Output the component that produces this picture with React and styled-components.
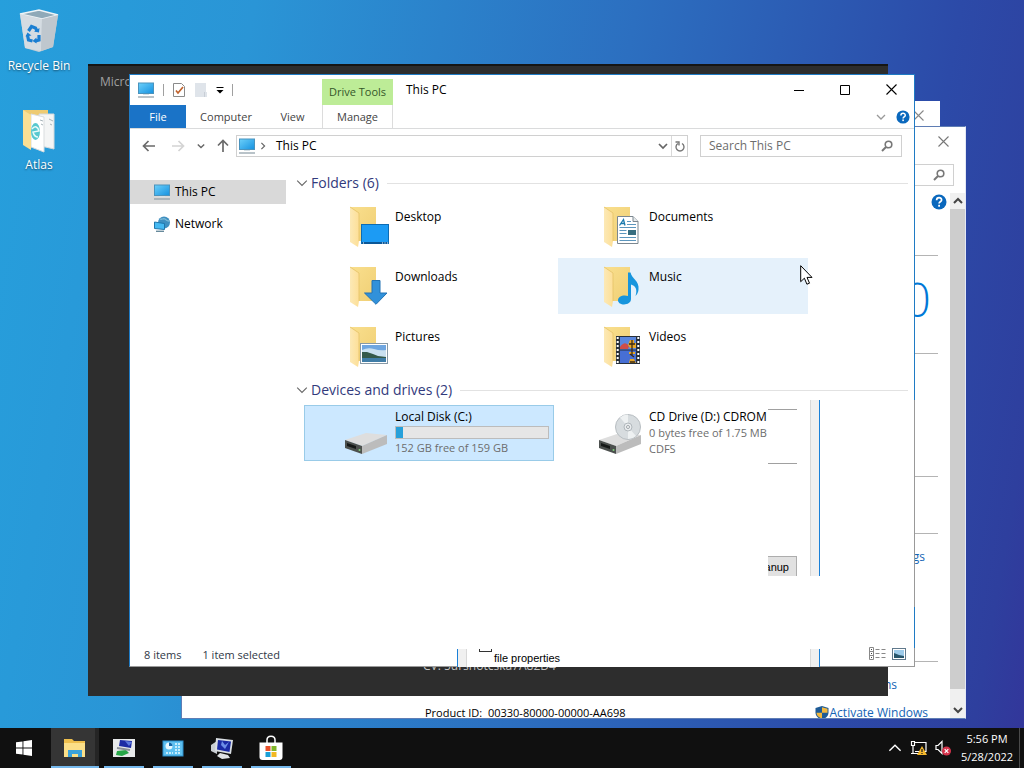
import React from 'react'
import styled, { createGlobalStyle } from 'styled-components'

const GlobalStyle = createGlobalStyle`
  * { box-sizing: border-box; }
  body {
    margin: 0;
    overflow: hidden;
    font-family: "Open Sans", "Noto Sans", sans-serif;
    font-size: 12px;
    line-height: 16px;
    color: #000;
  }
  button, input { font: inherit; color: inherit; }
  h1, h2, p { margin: 0; font-weight: 400; }
  svg { display: block; flex: none; }
`

const Screen = styled.div`
  display: flex;
  flex-direction: column;
  height: 100vh;
  background: linear-gradient(100deg, #269fdc 0%, #2a95d6 22%, #2c6fc0 55%, #2c4aa8 83%, #2e3f9e 95%, #33359a 100%);
`

const Desktop = styled.main`
  position: relative;
  flex: 1;
  overflow: hidden;
`

const IconColumn = styled.div`
  display: flex;
  flex-direction: column;
  width: 78px;
  padding-top: 6px;
  gap: 31px;
`

const DesktopIcon = styled.button`
  display: flex;
  flex-direction: column;
  align-items: center;
  gap: 4px;
  padding: 0;
  border: none;
  background: none;
  color: #fff;
  text-shadow: 0 1px 2px rgba(0, 0, 0, 0.5);
`

const Plain = styled.button`
  display: flex;
  align-items: center;
  justify-content: center;
  padding: 0;
  border: none;
  background: none;
  width: ${(p) => p.$w || 16}px;
`

/* windows */

const BackWindow = styled.section`
  position: absolute;
  top: 101px;
  right: 84px;
  left: 156px;
  bottom: 76px;
  background: #fff;
`

const BackTitle = styled.div`
  display: flex;
  justify-content: flex-end;
  align-items: center;
  height: 28px;
  padding-right: 14px;
`

const SystemWindow = styled.section`
  position: absolute;
  top: 126px;
  right: 58px;
  left: 181px;
  bottom: 9px;
  display: flex;
  flex-direction: column;
  border: 1px solid #5f7db4;
  border-right-color: #e4e8f4;
  background: #fff;
  overflow: hidden;
`

const SystemTitle = styled.div`
  display: flex;
  justify-content: flex-end;
  align-items: center;
  height: 29px;
  flex: none;
  padding-right: 14px;
`

const SystemSearchRow = styled.div`
  display: flex;
  justify-content: flex-end;
  align-items: center;
  height: 37px;
  flex: none;
  padding-right: 11px;
`

const SystemBody = styled.div`
  display: flex;
  flex: 1;
  min-height: 0;
`

const SystemContent = styled.div`
  display: flex;
  flex-direction: column;
  flex: 1;
`

const HelpRow = styled.div`
  display: flex;
  justify-content: flex-end;
  align-items: center;
  height: 18px;
  flex: none;
  padding-right: 3px;
`

const SystemSection = styled.div`
  display: flex;
  justify-content: flex-end;
  align-items: flex-start;
  flex: none;
  height: ${(p) => p.$h}px;
  margin-right: 12px;
  padding: 15px 13px 0 0;
  border-bottom: 1px solid #b4b4b4;
`

const Brand = styled.span`
  margin-right: -6px;
  color: #0078d7;
  font-size: 48px;
  font-weight: 300;
  line-height: 56px;
`

const SysLink = styled.a`
  color: #1464b4;
  text-decoration: none;
`

const TermsRow = styled.div`
  display: flex;
  justify-content: space-between;
  flex: none;
  height: 45px;
  padding: 15px 53px 0 63px;
`

const ProductRow = styled.div`
  display: flex;
  align-items: center;
  justify-content: space-between;
  height: 12px;
  padding: 0 22px 0 243px;
  line-height: 12px;
`

const Small = styled.span`
  font-size: 11px;
`

const Activate = styled.div`
  display: flex;
  align-items: center;
  gap: 1px;
`

const ScrollBar = styled.div`
  display: flex;
  flex-direction: column;
  align-items: center;
  width: 15px;
  background: #f0f0f0;
`

const Thumb = styled.div`
  flex: 1;
  width: 15px;
  background: #cdcdcd;
`

const ScrollButton = styled(Plain)`
  height: ${(p) => p.$h}px;
  align-items: flex-end;
  padding-bottom: 3px;
`

const DarkWindow = styled.section`
  position: absolute;
  top: 64px;
  right: 136px;
  left: 88px;
  bottom: 32px;
  display: flex;
  flex-direction: column;
  justify-content: space-between;
  padding: 8px 12px 22px;
  border-top: 2px solid #151515;
  background: #2d2d2d;
  color: #a0a0a0;
`

const DarkNote = styled.p`
  padding-left: 323px;
  color: #c4c4c4;
`

const ExplorerWindow = styled.section`
  position: absolute;
  top: 74px;
  right: 109px;
  left: 129px;
  bottom: 61px;
  display: flex;
  flex-direction: column;
  padding-right: 1px;
  border: 1px solid #1f7bc4;
  border-right: none;
  border-bottom-color: #9a9a9a;
  background: linear-gradient(#1f7bc4 0 55%, #999 55% 90%, #1f7bc4 90% 97%, #999 97%) right / 1px 100% no-repeat #fff;
`

const Panel = styled.div`
  display: flex;
  flex-direction: column;
  flex: 1;
  min-height: 0;
  background: #fff;
`

/* title and ribbon */

const TitleBar = styled.header`
  display: flex;
  height: 30px;
`

const QuickAccess = styled.div`
  display: flex;
  align-items: center;
  gap: 8px;
  width: 192px;
  padding-left: 7px;
`

const Separator = styled.span`
  width: 1px;
  height: 12px;
  background: #a0a0a0;
`

const ToolTab = styled.div`
  align-self: flex-end;
  width: 71px;
  height: 26px;
  padding-top: 5px;
  background: #bdec97;
  color: #35562a;
  text-align: center;
  font-size: 11px;
`

const Title = styled.h1`
  flex: 1;
  padding: 7px 0 0 13px;
  font-size: 12px;
`

const WindowButton = styled(Plain)`
  width: 46px;
  height: 29px;
`

const Ribbon = styled.nav`
  display: flex;
  align-items: stretch;
  height: 24px;
  border-bottom: 1px solid #dadbdc;
`

const Tab = styled.button`
  width: ${(p) => p.$w}px;
  padding: 0;
  border: none;
  background: ${(p) => (p.$file ? '#1a73c7' : 'none')};
  color: ${(p) => (p.$file ? '#fff' : '#444')};
  font-size: 11px;
  ${(p) => p.$tool && 'border: solid #dcdcdc; border-width: 0 1px; margin-left: 3px;'}
`

const RibbonEnd = styled.div`
  display: flex;
  align-items: center;
  gap: 7px;
  margin-left: auto;
  padding-right: 4px;
`

/* address row */

const AddressRow = styled.div`
  display: flex;
  align-items: center;
  height: 34px;
  padding: 0 12px 0 10px;
`

const NavButtons = styled.div`
  display: flex;
  align-items: center;
  justify-content: space-between;
  width: 90px;
  margin-right: 6px;
`

const AddressBox = styled.div`
  display: flex;
  align-items: center;
  flex: 1;
  height: 22px;
  padding-left: 1px;
  border: 1px solid #d0d0d0;
`

const Crumb = styled.span`
  flex: 1;
  padding-left: 6px;
`

const RefreshBox = styled(Plain)`
  width: 16px;
  height: 20px;
  border-left: 1px solid #d9d9d9;
`

const SearchBox = styled.label`
  display: flex;
  align-items: center;
  width: ${(p) => p.$w}px;
  height: 22px;
  margin-left: 12px;
  padding: 0 8px 0 8px;
  border: 1px solid #d0d0d0;

  input {
    flex: 1;
    min-width: 0;
    padding: 0;
    border: none;
    outline: none;
    background: none;
  }
  input::placeholder { color: #6d6d6d; opacity: 1; }
`

/* content */

const Content = styled.div`
  display: flex;
  flex: 1;
  min-height: 0;
`

const Sidebar = styled.aside`
  display: flex;
  flex-direction: column;
  gap: 8px;
  width: 166px;
  padding: 17px 10px 0 0;
`

const SideItem = styled.a`
  display: flex;
  align-items: center;
  gap: 4px;
  height: 24px;
  padding-left: 23px;
  background: ${(p) => (p.$active ? '#d9d9d9' : 'none')};
  color: #000;
  text-decoration: none;
`

const Files = styled.div`
  flex: 1;
  padding: 10px 6px 0 0;
`

const GroupHeader = styled.div`
  display: flex;
  align-items: center;
  height: 20px;
`

const GroupTitle = styled.h2`
  margin: 0 8px 0 4px;
  color: #323a7c;
  font-size: 14px;
`

const Rule = styled.span`
  flex: 1;
  height: 1px;
  background: #e2e2e2;
`

const ItemGrid = styled.div`
  display: grid;
  grid-template-columns: repeat(auto-fill, 250px);
  gap: 4px;
  padding: 5px 0 6px 8px;
`

const Item = styled.div`
  display: flex;
  align-items: flex-start;
  gap: 5px;
  height: 56px;
  padding: 4px 5px 0 38px;
  background: ${(p) => (p.$selected ? '#cce8ff' : p.$hover ? '#e5f1fb' : 'none')};
  box-shadow: ${(p) => (p.$selected ? 'inset 0 0 0 1px #99cbe8' : 'none')};
`

const ItemText = styled.div`
  flex: 1;
  padding-top: ${(p) => (p.$folder ? 7 : 0)}px;
  white-space: nowrap;
`

const Sub = styled.p`
  color: #6d6d6d;
  font-size: 11px;
`

const Capacity = styled.div`
  height: 13px;
  margin: 1px 0;
  border: 1px solid #bcbcbc;
  background: #e6e6e6;
`

const Used = styled.div`
  height: 11px;
  background: #26a0da;
`

const StatusBar = styled.footer`
  display: flex;
  align-items: center;
  gap: 21px;
  height: 22px;
  padding: 0 7px 0 14px;
  color: #303846;
  font-size: 11px;
`

const ViewButtons = styled.div`
  display: flex;
  gap: 6px;
  margin-left: auto;
  padding-bottom: 3px;
`

/* pieces of a dialog that have not been repainted */

const DialogPiece = styled.div`
  position: absolute;
  top: 325px;
  right: 95px;
  width: 52px;
  height: 176px;
  display: flex;
  background: #fff;
`

const PieceBody = styled.div`
  display: flex;
  flex-direction: column;
  justify-content: space-between;
  width: 29px;
  margin-right: 13px;
  padding-top: 9px;
`

const GroupFrame = styled.div`
  height: 55px;
  border: solid #a0a0a0;
  border-width: 1px 0;
`

const CleanupButton = styled.button`
  display: flex;
  justify-content: flex-end;
  height: 20px;
  padding: 2px 7px 0 0;
  border: 1px solid #adadad;
  border-width: 1px 1px 0 0;
  background: #e1e1e1;
  font-family: "Liberation Sans", sans-serif;
  font-size: 11px;
  overflow: hidden;
`

const DialogEdge = styled.div`
  flex: none;
  width: 10px;
  border-style: solid;
  border-width: 0 1px;
  border-color: ${(p) => (p.$left ? '#fff #d8d8d8 #fff #1a80d8' : '#fff #1a80d8 #fff #d8d8d8')};
  background: #f0f0f0;
`

const DialogFoot = styled.div`
  position: absolute;
  right: 95px;
  bottom: -1px;
  left: 327px;
  display: flex;
  height: 18px;
  background: #fff;
`

const FootLabel = styled.label`
  display: flex;
  flex: 1;
  align-items: flex-start;
  gap: 2px;
  padding-left: 12px;
  overflow: hidden;
  font-family: "Liberation Sans", sans-serif;
  font-size: 11px;
  line-height: 18px;

  input {
    appearance: none;
    width: 13px;
    height: 13px;
    margin: -10px 0 0;
    border: 1px solid #333;
    background: #fff;
  }
`

const Pointer = styled.svg`
  position: absolute;
  top: 265px;
  left: 800px;
`

/* taskbar */

const Taskbar = styled.footer`
  display: flex;
  align-items: stretch;
  height: 40px;
  background: #101010;
  color: #fff;
`

const TaskButtons = styled.div`
  display: flex;
  gap: 1px;
  padding-left: 3px;
`

const TaskButton = styled(Plain)`
  width: 48px;
  height: 40px;
  background:
    linear-gradient(#76b9ed, #76b9ed) bottom / ${(p) => (p.$active ? 48 : 40)}px 2px no-repeat,
    ${(p) => (p.$active ? 'linear-gradient(90deg, #353535 44px, #252525 44px)' : 'none')};
`

const Tray = styled.div`
  display: flex;
  align-items: center;
  margin-left: auto;
  padding-right: 4px;
`

const Clock = styled.div`
  width: 64px;
  text-align: center;
  font-size: 11px;
  line-height: 18px;
`

const ShowDesktop = styled.div`
  width: 1px;
  height: 40px;
  background: #4a4a4a;
`

/* icons */

const Monitor = ({ size = 18 }) => (
  <svg width={size} height={size} viewBox="0 0 18 18">
    <defs>
      <linearGradient id="scr" x1="0" y1="0" x2="1" y2="1">
        <stop offset="0" stopColor="#6cd0fa" />
        <stop offset="1" stopColor="#1591e0" />
      </linearGradient>
    </defs>
    <rect x="1.5" y="2" width="15" height="10.500" fill="url(#scr)" stroke="#4a93bd" />
    <path d="M1 16h16" stroke="#8a9ba5" strokeWidth="1.2" />
    <path d="M6 13.500h6" stroke="#d5e0e5" />
  </svg>
)

const NetworkIcon = () => (
  <svg width="18" height="18" viewBox="0 0 18 18">
    <circle cx="11" cy="7.500" r="6" fill="#3f8fc0" />
    <path d="M7 4c2 1 3-1 5 0s1 2 4 2" stroke="#7fbcd8" strokeWidth="1.300" fill="none" />
    <path d="M1.500 7l10 1.500v6l-10-1z" fill="#45b9f2" stroke="#1f77ac" />
    <path d="M3 16.300h8" stroke="#66899b" strokeWidth="1.400" />
  </svg>
)

const Close = ({ size = 11, color = '#000' }) => (
  <svg width={size} height={size} viewBox="0 0 11 11">
    <path d="M.5.5l10 10M10.500.5l-10 10" stroke={color} strokeWidth="1.1" />
  </svg>
)

const Chevron = ({ size = 10, color = '#666', turn = 0, width = 1.5 }) => (
  <svg width={size} height={size} viewBox="0 0 10 10">
    <path d="M1 3l4 4 4-4" fill="none" stroke={color} strokeWidth={width} transform={`rotate(${turn} 5 5)`} />
  </svg>
)

const Arrow = ({ color, turn = 0 }) => (
  <svg width="14" height="14" viewBox="0 0 14 14">
    <path d="M13 7H2M6.500 2L1.500 7l5 5" fill="none" stroke={color} strokeWidth="1.7" transform={`rotate(${turn} 7 7)`} />
  </svg>
)

const Magnifier = () => (
  <svg width="12" height="12" viewBox="0 0 12 12">
    <circle cx="7.500" cy="4.500" r="3.300" fill="none" stroke="#777" strokeWidth="1.600" />
    <path d="M5 7L1 11" stroke="#777" strokeWidth="2" />
  </svg>
)

const Help = ({ size }) => (
  <svg width={size} height={size} viewBox="0 0 16 16">
    <circle cx="8" cy="8" r="7.500" fill="#0a68bd" />
    <path d="M5.600 6.200c0-3.400 5-3.200 5-.3 0 1.900-2.500 1.900-2.500 3.700" fill="none" stroke="#fff" strokeWidth="1.700" />
    <rect x="7.200" y="10.800" width="1.800" height="1.900" fill="#fff" />
  </svg>
)

const overlays = {
  Desktop: (
    <>
      <rect x="19.500" y="22.500" width="27" height="19" fill="#1c9bf4" stroke="#0d6cb4" />
      <path d="M20 41h26" stroke="#0b5797" strokeWidth="2" />
      <path d="M21 41h1M40 41h1M42.500 41h1M45 41h1" stroke="#fff" />
    </>
  ),
  Downloads: <path d="M30 18.500h8V31h7L34 42.300 22.500 31H30z" fill="#3191da" stroke="#2273b4" />,
  Pictures: (
    <>
      <rect x="18.500" y="21.500" width="27" height="20" fill="#fff" stroke="#8799a6" />
      <rect x="20" y="23" width="24" height="17" fill="#6fa6e0" />
      <path d="M20 28q6-3 12-1t12 1v7H20z" fill="#c9e0f0" />
      <path d="M20 30l5 0 6 2 5 2 8 1v2H20z" fill="#34594a" />
      <path d="M20 36h24v4H20z" fill="#407da7" />
    </>
  ),
  Documents: (
    <>
      <path d="M21.500 14.500H37l5 5v22H21.500z" fill="#fff" stroke="#7b8790" />
      <path d="M37 14.500v5h5" fill="#e6eaec" stroke="#7b8790" />
      <path d="M23.500 23.500l4-6 1.500 6M25 21.500h4" stroke="#1979ad" strokeWidth="1.300" fill="none" />
      <path d="M31 19.500h4M31 22.500h9M23.500 25.500h16.500M23.500 28.500h7M23.500 31.500h7M23.500 35.500h16.500M23.500 38.500h16.500" stroke="#5c96bd" />
      <rect x="32" y="28" width="8" height="5" fill="#376e80" />
    </>
  ),
  Music: (
    <path
      d="M32 10.500h2.500c1 6 9 8 8 17-.2 3-1.500 5-3 6.500 2-6 .5-10-4.500-11.500V37c0 7-13 7-13 1.200 0-4 5.500-5.700 10-4.200z"
      fill="#1795dd"
    />
  ),
  Videos: (
    <>
      <rect x="20" y="14" width="24" height="28" fill="#28303a" />
      <path d="M21.700 15v27M42.300 15v27" stroke="#fff" strokeWidth="2" strokeDasharray="2 2" />
      <rect x="24" y="15" width="16" height="12.500" fill="#5b87dd" />
      <rect x="24" y="28.500" width="16" height="12.500" fill="#476fd4" />
      <path d="M24 25q5-7 9-1l-1 3h-8z" fill="#d04d48" />
      <path d="M34 18h4v3h2v5h-6l-2-3zM33 30h6v2h-6zM34 37h4l2 4h-7z" fill="#e7a727" />
      <path d="M33 22h6M36 18v16M34 32l4 3M34 40h5" stroke="#3c2a14" strokeWidth="1.300" />
    </>
  ),
}

const FolderIcon = ({ name }) => (
  <svg width="48" height="48" viewBox="0 0 48 48">
    <defs>
      <linearGradient id="fback" x1="0" y1="0" x2="1" y2="1">
        <stop offset="0" stopColor="#f9df8e" />
        <stop offset="1" stopColor="#f0cf74" />
      </linearGradient>
      <linearGradient id="fflap" x1="0" y1="0" x2="1" y2="0">
        <stop offset="0" stopColor="#fce9b6" />
        <stop offset="1" stopColor="#fddf97" />
      </linearGradient>
    </defs>
    <path d="M8 5h26v34H16z" fill="url(#fback)" />
    <path d="M8 5l9 6v28l-1 6-8-5z" fill="url(#fflap)" />
    <path d="M8 5l9 6v28" fill="none" stroke="#e3bf62" strokeWidth=".7" />
    {overlays[name]}
  </svg>
)

const DriveIcon = ({ disc }) => (
  <svg width="48" height="48" viewBox="0 0 48 48">
    <path d="M3 31l21-7 21 2-25 11z" fill="#dedede" />
    <path d="M20 37l25-11v9L20 45z" fill="#bcbcbc" />
    <path d="M3 31l17 6v8L3 39z" fill="#4c504e" />
    <path d="M5 34l9 3v3l-9-3z" fill="#151817" />
    <circle cx="17.500" cy="41" r="1" fill="#7fd07c" />
    {disc && (
      <>
        <circle cx="32" cy="18" r="12.500" fill="#d7dcdf" stroke="#b8bec2" />
        <path d="M32 18L24 8.500a12 12 0 0 1 8-3zM32 18l8 9a12 12 0 0 1-8 3z" fill="#eef1f2" />
        <circle cx="32" cy="18" r="4" fill="#e9ecee" stroke="#b1b8bc" />
        <circle cx="32" cy="18" r="1.500" fill="#fff" stroke="#9ea5a9" />
      </>
    )}
  </svg>
)

const RecycleBin = () => (
  <svg width="48" height="48" viewBox="0 0 48 48">
    <path d="M5 8l19-4 19 5-5 32-14 5-14-4z" fill="#c4ced6" />
    <path d="M5 8l19-4 19 5-16 4z" fill="#8fa9b8" stroke="#eef4f7" strokeWidth="1.500" />
    <path d="M5 8l22 5-1 32-16-3z" fill="#d5dce2" />
    <path d="M27 13l16-4-5 32-12 4z" fill="#bfc7ce" />
    <g fill="none" stroke="#1b7fd2" strokeWidth="3.200">
      <path d="M13.500 25l3-4.500 4 1.500 1.500 3M12.500 29l1 5 4 1M20.500 35l3.500-1 0-5" />
    </g>
    <path d="M19 25.500l5 1 .5-4.500zM10.500 30.500l2-4 4 3zM21.500 31.500v6l-4-2.500z" fill="#1b7fd2" />
  </svg>
)

const AtlasFolder = () => (
  <svg width="48" height="48" viewBox="0 0 48 48">
    <path d="M8 5h25v34H14z" fill="#eecb72" />
    <path d="M24 9h15v35l-13-3z" fill="#f4f5f5" stroke="#d5d9db" />
    <path d="M16 9l13 3v35l-13-5z" fill="#fff" stroke="#d9dddf" />
    <ellipse cx="20.500" cy="26.500" rx="4.500" ry="8.500" fill="#58c8cf" />
    <path d="M17 24c3-4 6-2 7 2l-6 1c1 4 3 5 5 5" fill="none" stroke="#e7fafa" strokeWidth="1.500" />
    <path d="M25 15l3 1M34 14l4 2M26 19l2 1M35 19l2 1" stroke="#a7b3b9" />
    <path d="M8 5l8 5v35l-8-5z" fill="#fadf94" />
  </svg>
)

const Clipboard = () => (
  <svg width="14" height="16" viewBox="0 0 14 16">
    <path d="M1.500 1.500h8l3 3v10h-11z" fill="#fff" stroke="#8a8a8a" />
    <path d="M4 8.500l2 2.500 5-6" fill="none" stroke="#c0622c" strokeWidth="1.700" />
  </svg>
)

const NewFolder = () => (
  <svg width="14" height="16" viewBox="0 0 14 16">
    <path d="M1 1h11v9h1v5H1z" fill="#dfe4ea" />
    <path d="M10.500 10v5" stroke="#c8ced6" />
  </svg>
)

const Thumbs = () => (
  <svg width="15" height="12" viewBox="0 0 15 12">
    <rect x=".5" y=".5" width="13" height="11" fill="#fff" stroke="#60798c" />
    <rect x="2" y="2" width="10" height="8" fill="#9dcbea" />
    <path d="M2 5l5 2 5 1v2H2z" fill="#28566c" />
  </svg>
)

const DetailsView = () => (
  <svg width="17" height="13" viewBox="0 0 17 13">
    <path d="M.5.5h4v12h-4zM.5 4.500h4M.5 8.500h4M6.500 2.500h4M12.500 2.500h4M6.500 6.500h4M12.500 6.500h4M6.500 10.500h4M12.500 10.500h4" fill="none" stroke="#888" />
    <path d="M2 2.500h1M2 6.500h1M2 10.500h1" stroke="#444" />
  </svg>
)

const Shield = () => (
  <svg width="14" height="14" viewBox="0 0 14 14">
    <path d="M7 0l6.500 2v4.500c0 4-3.500 6-6.500 7.500C4 12.500.5 10.500.5 6.500V2z" fill="#1e5b96" />
    <path d="M7 1.200l5.500 1.600v4H7zM7 6.800v6C4.500 11.500 1.500 10 1.500 6.800z" fill="#f2b83f" />
  </svg>
)

const ExplorerTask = () => (
  <svg width="24" height="24" viewBox="0 0 24 24">
    <path d="M1 3h8l2 2h11v15H1z" fill="#eebf4d" />
    <path d="M1 7h21v14H1z" fill="#fbdf88" />
    <path d="M5 21v-7h14v7h-4v-3H9v3z" fill="#3ba2da" />
  </svg>
)

const ServerTask = () => (
  <svg width="24" height="24" viewBox="0 0 24 24">
    <rect x="1" y="3" width="22" height="18" fill="#e7e9ea" />
    <path d="M8 4l12 1-1 7-12-2z" fill="#1d2ba4" />
    <path d="M13 5l7 1-3 4z" fill="#5a77dc" />
    <path d="M5 15l9-1 3 3-7 3-6-1z" fill="#26a647" />
    <path d="M5 12l13 2" stroke="#8a9098" strokeWidth="2" />
  </svg>
)

const PanelTask = () => (
  <svg width="24" height="24" viewBox="0 0 24 24">
    <rect x="2" y="5" width="20" height="15" fill="#5ec0f0" stroke="#2b8ecb" />
    <circle cx="8" cy="10" r="3.500" fill="#e7f8ff" />
    <path d="M8 10V6.500A3.500 3.500 0 0 1 11.500 10z" fill="#1568a8" />
    <path d="M14 8h6M14 11h6M14 14h6M5 17h7M14 17h6" stroke="#e8faff" strokeWidth="1.400" strokeDasharray="2 1" />
  </svg>
)

const RemoteTask = () => (
  <svg width="24" height="24" viewBox="0 0 24 24">
    <path d="M1 9l6-4v13l-6-3z" fill="#c8cdd2" />
    <path d="M6 2l17 2-2 14-16-3z" fill="#d9dee3" />
    <path d="M8 4l13 1.500-1.500 10.500L7 13.500z" fill="#1b2ba5" />
    <path d="M12 5l3 4 4-3-4 7-4-4z" fill="#6d8fe8" />
    <path d="M10 17l8 2 2 3-8 1-5-3z" fill="#e0e3e6" />
  </svg>
)

const StoreTask = () => (
  <svg width="26" height="26" viewBox="0 0 26 26">
    <path d="M9 8V5c0-5 8-5 8 0v3" fill="none" stroke="#fff" strokeWidth="1.500" />
    <path d="M1.500 7.500h23V22c0 2-1 3-3 3h-17c-2 0-3-1-3-3z" fill="#fff" />
    <path d="M7.500 11h5v5h-5z" fill="#e8502b" />
    <path d="M13.500 11h5v5h-5z" fill="#7fb529" />
    <path d="M7.500 17h5v5h-5z" fill="#1b9fd6" />
    <path d="M13.500 17h5v5h-5z" fill="#f2b822" />
  </svg>
)

const folders = ['Desktop', 'Documents', 'Downloads', 'Music', 'Pictures', 'Videos']
const tasks = [
  { name: 'File Explorer', icon: <ExplorerTask />, active: true },
  { name: 'Server Manager', icon: <ServerTask /> },
  { name: 'Control Panel', icon: <PanelTask /> },
  { name: 'Remote Desktop', icon: <RemoteTask /> },
  { name: 'Store', icon: <StoreTask /> },
]

const Group = ({ title, children }) => (
  <section>
    <GroupHeader>
      <Plain $w={11} aria-label={`Collapse ${title}`}>
        <Chevron size={12} color="#666" width={0.9} />
      </Plain>
      <GroupTitle>{title}</GroupTitle>
      <Rule />
    </GroupHeader>
    <ItemGrid>{children}</ItemGrid>
  </section>
)

const SystemProperties = () => (
  <SystemWindow>
    <SystemTitle>
      <Plain aria-label="Close"><Close size={11} color="#777" /></Plain>
    </SystemTitle>
    <SystemSearchRow>
      <SearchBox $w={200}>
        <input aria-label="Search" />
        <Magnifier />
      </SearchBox>
    </SystemSearchRow>
    <SystemBody>
      <SystemContent>
        <HelpRow><Help size={16} /></HelpRow>
        <SystemSection $h={45} />
        <SystemSection $h={98}><Brand>0</Brand></SystemSection>
        <SystemSection $h={123} />
        <SystemSection $h={57} />
        <SystemSection $h={128}><SysLink href="#settings">gs</SysLink></SystemSection>
        <TermsRow>
          <span>y</span>
          <SysLink href="#terms">ns</SysLink>
        </TermsRow>
        <ProductRow>
          <Small>Product ID:&nbsp; 00330-80000-00000-AA698</Small>
          <Activate>
            <Shield />
            <SysLink href="#activate">Activate Windows</SysLink>
          </Activate>
        </ProductRow>
      </SystemContent>
      <ScrollBar>
        <ScrollButton $h={16} aria-label="Scroll up"><Chevron turn={180} color="#444" width={2} /></ScrollButton>
        <Thumb />
        <ScrollButton $h={29} aria-label="Scroll down"><Chevron color="#444" width={2} /></ScrollButton>
      </ScrollBar>
    </SystemBody>
  </SystemWindow>
)

const Explorer = () => (
  <ExplorerWindow>
    <Panel>
      <TitleBar>
        <QuickAccess>
          <Monitor />
          <Separator />
          <Plain $w={14} aria-label="Properties"><Clipboard /></Plain>
          <Plain $w={14} aria-label="New folder"><NewFolder /></Plain>
          <Plain $w={8} aria-label="Customize">
            <svg width="8" height="8" viewBox="0 0 8 8"><path d="M.5 1.500h7" stroke="#000" /><path d="M.5 4h7L4 7.500z" /></svg>
          </Plain>
          <Separator />
        </QuickAccess>
        <ToolTab>Drive Tools</ToolTab>
        <Title>This PC</Title>
        <WindowButton aria-label="Minimize">
          <svg width="10" height="10" viewBox="0 0 10 10"><path d="M0 5.500h10" stroke="#000" /></svg>
        </WindowButton>
        <WindowButton aria-label="Maximize">
          <svg width="10" height="10" viewBox="0 0 10 10"><path d="M.5.5h9v9h-9z" fill="none" stroke="#000" /></svg>
        </WindowButton>
        <WindowButton aria-label="Close"><Close /></WindowButton>
      </TitleBar>
      <Ribbon>
        <Tab $w={56} $file>File</Tab>
        <Tab $w={80}>Computer</Tab>
        <Tab $w={53}>View</Tab>
        <Tab $w={71} $tool>Manage</Tab>
        <RibbonEnd>
          <Plain aria-label="Expand ribbon"><Chevron color="#999" width={1.3} /></Plain>
          <Help size={14} />
        </RibbonEnd>
      </Ribbon>
      <AddressRow>
        <NavButtons>
          <Plain $w={18} aria-label="Back"><Arrow color="#6a6a6a" /></Plain>
          <Plain $w={18} aria-label="Forward"><Arrow color="#d4d4d4" turn={180} /></Plain>
          <Plain $w={8} aria-label="Recent"><Chevron size={8} width={1.7} /></Plain>
          <Plain $w={14} aria-label="Up"><Arrow color="#6a6a6a" turn={90} /></Plain>
        </NavButtons>
        <AddressBox>
          <Monitor />
          <Plain $w={14} aria-label="Show locations"><Chevron size={8} turn={-90} /></Plain>
          <Crumb>This PC</Crumb>
          <Plain aria-label="Previous locations"><Chevron width={1.7} /></Plain>
          <RefreshBox aria-label="Refresh">
            <svg width="12" height="12" viewBox="0 0 12 12">
              <path d="M8 3.500A4 4 0 1 1 4 3.500M1.500 2h3.500v3.500" fill="none" stroke="#777" strokeWidth="1.400" />
            </svg>
          </RefreshBox>
        </AddressBox>
        <SearchBox $w={202}>
          <input aria-label="Search This PC" placeholder="Search This PC" />
          <Magnifier />
        </SearchBox>
      </AddressRow>
      <Content>
        <Sidebar>
          <SideItem href="#pc" $active><Monitor />This PC</SideItem>
          <SideItem href="#network"><NetworkIcon />Network</SideItem>
        </Sidebar>
        <Files>
          <Group title="Folders (6)">
            {folders.map((name) => (
              <Item key={name} $hover={name === 'Music'}>
                <FolderIcon name={name} />
                <ItemText $folder>{name}</ItemText>
              </Item>
            ))}
          </Group>
          <Group title="Devices and drives (2)">
            <Item $selected>
              <DriveIcon />
              <ItemText>
                <p>Local Disk (C:)</p>
                <Capacity><Used style={{ width: `${(7 / 159) * 100}%` }} /></Capacity>
                <Sub>152 GB free of 159 GB</Sub>
              </ItemText>
            </Item>
            <Item>
              <DriveIcon disc />
              <ItemText>
                <p>CD Drive (D:) CDROM</p>
                <Sub>0 bytes free of 1.75 MB</Sub>
                <Sub>CDFS</Sub>
              </ItemText>
            </Item>
          </Group>
        </Files>
      </Content>
      <StatusBar>
        <span>8 items</span>
        <span>1 item selected</span>
        <ViewButtons>
          <Plain $w={17} aria-label="Details"><DetailsView /></Plain>
          <Plain $w={15} aria-label="Large icons"><Thumbs /></Plain>
        </ViewButtons>
      </StatusBar>
    </Panel>
    <DialogPiece>
      <PieceBody>
        <GroupFrame />
        <CleanupButton>anup</CleanupButton>
      </PieceBody>
      <DialogEdge />
    </DialogPiece>
    <DialogFoot>
      <DialogEdge $left />
      <FootLabel><input type="checkbox" />file properties</FootLabel>
      <DialogEdge />
    </DialogFoot>
  </ExplorerWindow>
)

const App = () => {
  return (
    <Screen>
      <GlobalStyle />
      <Desktop>
        <IconColumn>
          <DesktopIcon><RecycleBin />Recycle Bin</DesktopIcon>
          <DesktopIcon><AtlasFolder />Atlas</DesktopIcon>
        </IconColumn>
        <BackWindow>
          <BackTitle><Plain aria-label="Close"><Close size={11} color="#888" /></Plain></BackTitle>
        </BackWindow>
        <SystemProperties />
        <DarkWindow>
          <p>Micro</p>
          <DarkNote>CV: 5ursnotcska7A82D4</DarkNote>
        </DarkWindow>
        <Explorer />
        <Pointer width="13" height="20" viewBox="0 0 13 20">
          <path d="M.7.7v16l3.700-3.500 2.500 6 2.600-1-2.500-5.800h5z" fill="#fff" stroke="#000" />
        </Pointer>
      </Desktop>
      <Taskbar>
        <Plain $w={48} aria-label="Start">
          <svg width="16" height="16" viewBox="0 0 16 16">
            <path d="M0 2.300L6.500 1.400v6.200H0zM7.400 1.300L16 0v7.600H7.400zM0 8.400h6.500v6.200L0 13.700zM7.400 8.400H16V16l-8.600-1.300z" fill="#fff" />
          </svg>
        </Plain>
        <TaskButtons>
          {tasks.map((t) => (
            <TaskButton key={t.name} aria-label={t.name} $active={t.active}>
              {t.icon}
            </TaskButton>
          ))}
        </TaskButtons>
        <Tray>
          <Plain $w={24} aria-label="Show hidden icons"><Chevron size={14} turn={180} color="#fff" width={1} /></Plain>
          <Plain $w={24} aria-label="Network">
            <svg width="18" height="16" viewBox="0 0 18 16">
              <path d="M5 2.500h11v9H5M1.500 1.500h3v4h-3zM3 5.500v8M1 13.500h8" fill="none" stroke="#fff" strokeWidth="1.200" />
              <path d="M12 6l5 9H7z" fill="#f5b82c" />
              <path d="M12 9v3M12 13v1" stroke="#222" strokeWidth="1.300" />
            </svg>
          </Plain>
          <Plain $w={24} aria-label="Volume">
            <svg width="18" height="16" viewBox="0 0 18 16">
              <path d="M2 5.500h2l4-4v12l-4-4H2z" fill="none" stroke="#fff" strokeWidth="1.200" />
              <circle cx="12.500" cy="11" r="4.500" fill="#d5334b" />
              <path d="M10.700 9.200l3.600 3.600M14.300 9.200l-3.600 3.600" stroke="#fff" strokeWidth="1.200" />
            </svg>
          </Plain>
          <Clock>5:56 PM<br />5/28/2022</Clock>
          <ShowDesktop />
        </Tray>
      </Taskbar>
    </Screen>
  )
}

export default App
